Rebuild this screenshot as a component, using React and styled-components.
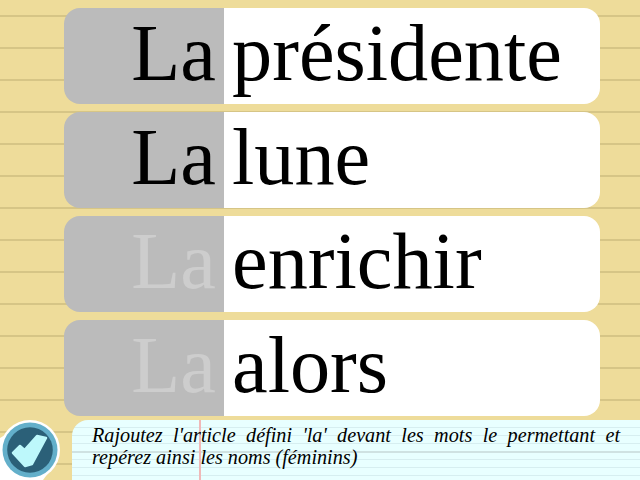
import React from "react";
import styled, { createGlobalStyle } from "styled-components";

const GlobalStyle = createGlobalStyle`
  html, body {
    margin: 0;
    padding: 0;
    background: #eedc9a;
  }
`;

const Page = styled.div`
  width: 640px;
  height: 480px;
  font-family: "Liberation Serif", serif;
  background-color: #eedc9a;
  background-image: repeating-linear-gradient(
    to bottom,
    transparent 0,
    transparent 15px,
    #d6c586 15px,
    #d6c586 17px,
    transparent 17px,
    transparent 32px
  );
  display: flex;
  flex-direction: column;
`;

const WordList = styled.div`
  display: flex;
  flex-direction: column;
  gap: 8px;
  padding: 8px 40px 0 64px;
`;

const WordRow = styled.div`
  display: flex;
  height: 96px;
  font-size: 80.3px;
  line-height: 90px;
`;

const ArticleCell = styled.div`
  width: 160px;
  padding-right: 8px;
  box-sizing: border-box;
  border-radius: 16px 0 0 16px;
  background: #bbbbbb;
  text-align: right;
  color: ${(props) => (props.$active ? "#000" : "#cdcdcd")};
`;

const WordCell = styled.div`
  flex: 1;
  padding-left: 8px;
  border-radius: 0 16px 16px 0;
  background: #fff;
  color: #000;
`;

const Footer = styled.div`
  display: flex;
  margin-top: 4px;
  height: 60px;
`;

const CheckButton = styled.div`
  width: 72px;
  flex: none;
  position: relative;
`;

const CheckIcon = styled.svg`
  position: absolute;
  left: 0;
  top: 0;
  display: block;
`;

const Instructions = styled.div`
  position: relative;
  flex: 1;
  box-sizing: border-box;
  padding: 4px 20px 0;
  border-top-left-radius: 16px;
  background-color: #e8ffff;
  background-image:
    repeating-linear-gradient(
      to bottom,
      transparent 0,
      transparent 31px,
      #cfe2e2 31px,
      #cfe2e2 33px,
      transparent 33px,
      transparent 64px
    ),
    repeating-linear-gradient(
      to bottom,
      transparent 0,
      transparent 7px,
      #d6eef0 7px,
      #d6eef0 8.5px,
      transparent 8.5px,
      transparent 8px
    );
  background-size: 100% 64px, 100% 8px;
  font-size: 20.2px;
  line-height: 22px;
  font-style: italic;
  text-align: justify;
  color: #000;
`;

const MarginLine = styled.div`
  position: absolute;
  left: 127px;
  top: 0;
  bottom: 0;
  width: 2px;
  background: #f0b8b8;
`;

const InstructionText = styled.div`
  position: relative;
`;

const words = [
  { word: "présidente", active: true },
  { word: "lune", active: true },
  { word: "enrichir", active: false },
  { word: "alors", active: false },
];

export default function App() {
  return (
    <Page>
      <GlobalStyle />
      <WordList>
        {words.map((item) => (
          <WordRow key={item.word}>
            <ArticleCell $active={item.active}>La</ArticleCell>
            <WordCell>{item.word}</WordCell>
          </WordRow>
        ))}
      </WordList>
      <Footer>
        <CheckButton>
          <CheckIcon width="62" height="60" viewBox="0 0 62 60">
            <path d="M0 18 L30 0 L58 40 L43 60 L0 60 Z" fill="#fff" />
            <circle cx="30" cy="30" r="30" fill="#fff" />
            <circle cx="30" cy="30" r="27.5" fill="#63afca" />
            <circle cx="30" cy="30" r="22.8" fill="#2b6078" />
            <path d="M13 33 L20 26 L24.5 30 L37 16 L46 18 L32 44 L25 46 Z" fill="#bdf8fb" stroke="#bdf8fb" strokeWidth="2.5" strokeLinejoin="round" />
          </CheckIcon>
        </CheckButton>
        <Instructions>
          <MarginLine />
          <InstructionText>
            Rajoutez l'article défini 'la' devant les mots le permettant et repérez ainsi les noms (féminins)
          </InstructionText>
        </Instructions>
      </Footer>
    </Page>
  );
}
